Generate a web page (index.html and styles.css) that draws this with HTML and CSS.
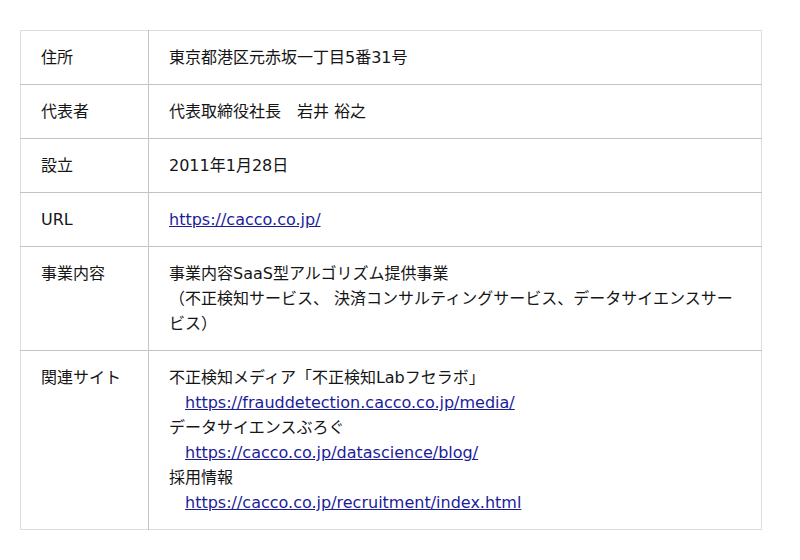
FILE: index.html
```html
<!DOCTYPE html>
<html lang="ja">
<head>
<meta charset="utf-8">
<title>会社概要</title>
<link rel="stylesheet" href="styles.css">
</head>
<body>
<div class="wrap">
<table class="info">
  <tr><th>住所</th><td>東京都港区元赤坂一丁目5番31号</td></tr>
  <tr><th>代表者</th><td>代表取締役社長　岩井 裕之</td></tr>
  <tr><th>設立</th><td>2011年1月28日</td></tr>
  <tr><th>URL</th><td><a href="#">https://cacco.co.jp/</a></td></tr>
  <tr><th>事業内容</th><td>事業内容SaaS型アルゴリズム提供事業<br>（不正検知サービス、 決済コンサルティングサービス、データサイエンスサービス）</td></tr>
  <tr><th>関連サイト</th><td>不正検知メディア「不正検知Labフセラボ」<br>　<a href="#">https://frauddetection.cacco.co.jp/media/</a><br>データサイエンスぶろぐ<br>　<a href="#">https://cacco.co.jp/datascience/blog/</a><br>採用情報<br>　<a href="#">https://cacco.co.jp/recruitment/index.html</a></td></tr>
</table>
</div>
</body>
</html>
```

FILE: styles.css
```css
html, body {
  margin: 0;
  padding: 0;
  background: #ffffff;
}
body {
  font-family: "DejaVu Sans", "Noto Sans CJK JP", sans-serif;
  font-size: 16px;
  line-height: 25px;
  color: #151515;
}
.wrap {
  padding: 30px 20px;
}
.info {
  width: 742px;
  border-collapse: collapse;
  border: 1px solid #dddddd;
}
.info th,
.info td {
  text-align: left;
  vertical-align: top;
  font-weight: normal;
  padding: 14px 20px;
}
.info th {
  width: 87px;
  border-right: 1px solid #c4c4c4;
}
.info tr + tr th,
.info tr + tr td {
  border-top: 1px solid #c4c4c4;
}
.info a {
  color: #1c1c9a;
  text-decoration: underline;
}
```
